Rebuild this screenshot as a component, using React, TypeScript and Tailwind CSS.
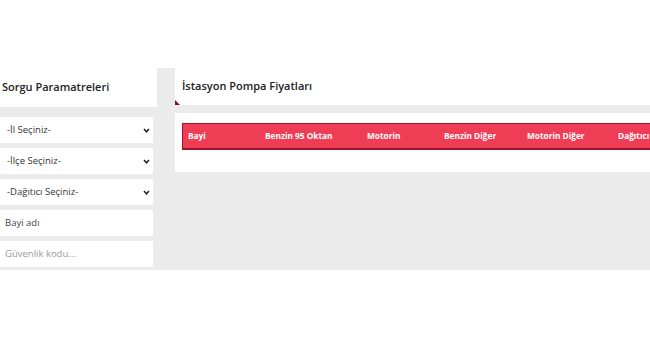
import React from 'react';

const Chevron = () => (
  <svg width="7" height="5" viewBox="0 0 7 5" className="shrink-0">
    <polyline points="1,1 3.5,3.8 6,1" fill="none" stroke="#222" strokeWidth="1.5" />
  </svg>
);

const SelectBox = ({ label }: { label: string }) => (
  <div className="h-[26px] w-[153px] bg-white flex items-center justify-between pl-[7px] pr-[3px] text-[9.5px] text-[#333]">
    <span>{label}</span>
    <Chevron />
  </div>
);

const InputBox = ({ label, muted }: { label: string; muted?: boolean }) => (
  <div
    className={
      muted
        ? 'h-[26px] w-[153px] bg-white flex items-center pl-[5px] text-[9.5px] text-[#9a9a9a]'
        : 'h-[26px] w-[153px] bg-white flex items-center pl-[5px] text-[9.5px] text-[#444]'
    }
  >
    {label}
  </div>
);

const columns = [
  { name: 'Bayi', w: 'w-[82px] pl-[5px]' },
  { name: 'Benzin 95 Oktan', w: 'w-[102px]' },
  { name: 'Motorin', w: 'w-[77px]' },
  { name: 'Benzin Diğer', w: 'w-[83px]' },
  { name: 'Motorin Diğer', w: 'w-[91px]' },
  { name: 'Dağıtıcı', w: 'w-[80px]' },
];

export default function App() {
  return (
    <div className="w-[650px] h-[360px] bg-white overflow-hidden font-['Open_Sans','Noto_Sans',sans-serif]">
      <div className="pt-[68px]">
        <div className="flex h-[202px] bg-[#ebebeb]">
          {/* sol panel */}
          <div className="w-[157px] shrink-0">
            <div className="h-[39px] bg-white flex items-center pl-[2px] text-[11px] font-semibold text-[#222]">
              Sorgu Paramatreleri
            </div>
            <div className="flex flex-col gap-[5px] pt-[10px]">
              <SelectBox label="-İl Seçiniz-" />
              <SelectBox label="-İlçe Seçiniz-" />
              <SelectBox label="-Dağıtıcı Seçiniz-" />
              <InputBox label="Bayi adı" />
              <InputBox label="Güvenlik kodu..." muted />
            </div>
          </div>

          <div className="w-[18px] shrink-0" />

          {/* sağ panel */}
          <div className="flex-1 min-w-0">
            <div className="relative h-[37px] bg-white flex items-center pl-[7px] text-[11px] font-semibold text-[#222]">
              İstasyon Pompa Fiyatları
              <span className="absolute left-0 bottom-0 w-0 h-0 border-l-[5px] border-l-[#7a1020] border-t-[5px] border-t-transparent" />
            </div>
            <div className="mt-[8px] h-[59px] bg-white pt-[10px] pl-[7px] overflow-hidden">
              <div className="flex items-center h-[27px] w-[520px] bg-[#ef3d55] border border-[#9b1629] border-b-2 text-white text-[8.3px] font-bold whitespace-nowrap">
                {columns.map((c) => (
                  <div key={c.name} className={`${c.w} shrink-0`}>
                    {c.name}
                  </div>
                ))}
              </div>
            </div>
          </div>
        </div>
      </div>
    </div>
  );
}
